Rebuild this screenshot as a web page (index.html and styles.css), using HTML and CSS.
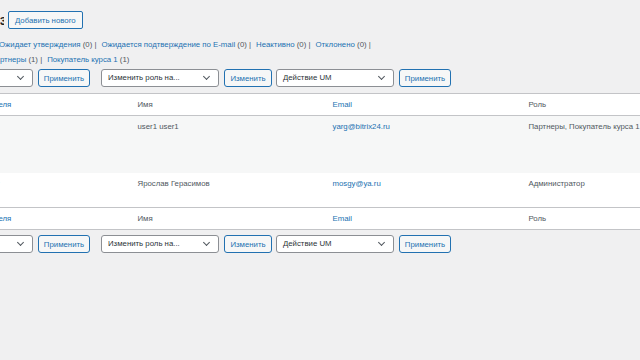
FILE: index.html
```html
<!DOCTYPE html>
<html lang="ru">
<head>
  <meta charset="UTF-8">
  <meta name="viewport" content="width=device-width, initial-scale=1.0">
  <title>Пользователи</title>
  <link rel="stylesheet" href="styles.css">
</head>
<body>

<div class="wrap">
  <div class="page-head">
    <h1>Пользователи</h1>
    <a class="add-btn" href="#">Добавить нового</a>
  </div>

  <ul class="filters">
    <li class="first"><a href="#">Ожидает утверждения</a> <span class="count">(0)</span> |</li>
    <li><a href="#">Ожидается подтверждение по E-mail</a> <span class="count">(0)</span> |</li>
    <li><a href="#">Неактивно</a> <span class="count">(0)</span> |</li>
    <li><a href="#">Отклонено</a> <span class="count">(0)</span> |</li>
  </ul>
  <ul class="filters">
    <li class="cut"><a href="#">Партнеры</a> <span class="count">(1)</span> |</li>
    <li><a href="#">Покупатель курса 1</a> <span class="count">(1)</span></li>
  </ul>

  <div class="toolbar">
    <div class="select select-cut">Действия <span class="chev"></span></div>
    <button class="btn">Применить</button>
    <div class="select">Изменить роль на... <span class="chev"></span></div>
    <button class="btn btn-narrow">Изменить</button>
    <div class="select">Действие UM <span class="chev"></span></div>
    <button class="btn">Применить</button>
  </div>

  <table class="users">
    <colgroup>
      <col class="c-cb">
      <col class="c-user">
      <col class="c-name">
      <col class="c-mail">
      <col class="c-role">
    </colgroup>
    <thead>
      <tr>
        <th></th>
        <th><a href="#">Имя пользователя</a></th>
        <th>Имя</th>
        <th><a href="#">Email</a></th>
        <th>Роль</th>
      </tr>
    </thead>
    <tbody>
      <tr class="alt">
        <td></td>
        <td><div class="user-cell tall"><span class="avatar"></span><a href="#">user1</a></div></td>
        <td>user1 user1</td>
        <td><a href="#">yarg@bitrix24.ru</a></td>
        <td>Партнеры, Покупатель курса 1</td>
      </tr>
      <tr>
        <td></td>
        <td><div class="user-cell"><span class="avatar"></span><a href="#">mosgy</a></div></td>
        <td>Ярослав Герасимов</td>
        <td><a href="#">mosgy@ya.ru</a></td>
        <td>Администратор</td>
      </tr>
    </tbody>
    <tfoot>
      <tr>
        <th></th>
        <th><a href="#">Имя пользователя</a></th>
        <th>Имя</th>
        <th><a href="#">Email</a></th>
        <th>Роль</th>
      </tr>
    </tfoot>
  </table>

  <div class="toolbar bottom">
    <div class="select select-cut">Действия <span class="chev"></span></div>
    <button class="btn">Применить</button>
    <div class="select">Изменить роль на... <span class="chev"></span></div>
    <button class="btn btn-narrow">Изменить</button>
    <div class="select">Действие UM <span class="chev"></span></div>
    <button class="btn">Применить</button>
  </div>
</div>

</body>
</html>
```

FILE: styles.css
```css
body {
  margin: 0;
  background: #f0f0f1;
  color: #50575e;
  font-family: "Liberation Sans", Arial, sans-serif;
  font-size: 7.8px;
  overflow: hidden;
}
a {
  color: #2271b1;
  text-decoration: none;
}
.wrap {
  padding-top: 11px;
}
.page-head {
  display: flex;
  align-items: center;
  gap: 4px;
  height: 18px;
}
.page-head h1 {
  width: 40px;
  margin: 0 0 0 -36px;
  font-size: 14px;
  font-weight: 600;
  line-height: 18px;
  color: #1d2327;
  text-align: right;
  white-space: nowrap;
  overflow: hidden;
}
.add-btn {
  display: flex;
  align-items: center;
  height: 16px;
  padding: 0 6px;
  border: 1px solid #2271b1;
  border-radius: 2px;
  background: #f6f7f7;
}
.filters {
  list-style: none;
  margin: 0;
  padding: 0;
  display: flex;
  white-space: nowrap;
  line-height: 15px;
}
.filters:first-of-type {
  margin-top: 8px;
}
.filters li {
  margin-right: 5px;
}
.filters li.first {
  margin-left: -1px;
}
.filters li.cut {
  margin-left: -10px;
}
.toolbar {
  display: flex;
  align-items: center;
  height: 18px;
  margin-top: 2px;
}
.toolbar.bottom {
  margin-top: 5px;
}
.select {
  position: relative;
  box-sizing: border-box;
  width: 118px;
  height: 18px;
  line-height: 16px;
  padding-left: 6px;
  border: 1px solid #8c8f94;
  border-radius: 3px;
  background: #fff;
  color: #2c3338;
  white-space: nowrap;
  margin-right: 5px;
}
.select-cut {
  margin-left: -85px;
}
.chev {
  position: absolute;
  right: 9px;
  top: 4px;
  width: 4px;
  height: 4px;
  border-right: 1px solid #50575e;
  border-bottom: 1px solid #50575e;
  transform: rotate(45deg);
}
.btn {
  box-sizing: border-box;
  height: 18px;
  width: 52px;
  padding: 0;
  border: 1px solid #2271b1;
  border-radius: 3px;
  background: #f6f7f7;
  color: #2271b1;
  font-family: inherit;
  font-size: 7.8px;
  margin-right: 11px;
}
.btn-narrow {
  width: 48px;
  margin-right: 4px;
}
.toolbar .btn:last-child {
  margin-right: 0;
}
.users {
  margin-top: 6px;
  margin-left: -86px;
  width: 900px;
  table-layout: fixed;
  border-collapse: collapse;
  background: #fff;
  border: 1px solid #c3c4c7;
}
.c-cb { width: 24px; }
.c-user { width: 193px; }
.c-name { width: 195px; }
.c-mail { width: 196px; }
.users th,
.users td {
  text-align: left;
  font-weight: 400;
  vertical-align: top;
  padding: 5px 6px;
  line-height: 11px;
  white-space: nowrap;
}
.users thead th {
  border-bottom: 1px solid #c3c4c7;
}
.users tfoot th {
  border-top: 1px solid #c3c4c7;
}
.users tr.alt td {
  background: #f6f7f7;
}
.user-cell {
  height: 24px;
}
.user-cell.tall {
  height: 47px;
}
.user-cell a {
  font-weight: 600;
}
.avatar {
  float: left;
  width: 24px;
  height: 24px;
  margin-right: 6px;
  background: #dcdcde;
}
```
